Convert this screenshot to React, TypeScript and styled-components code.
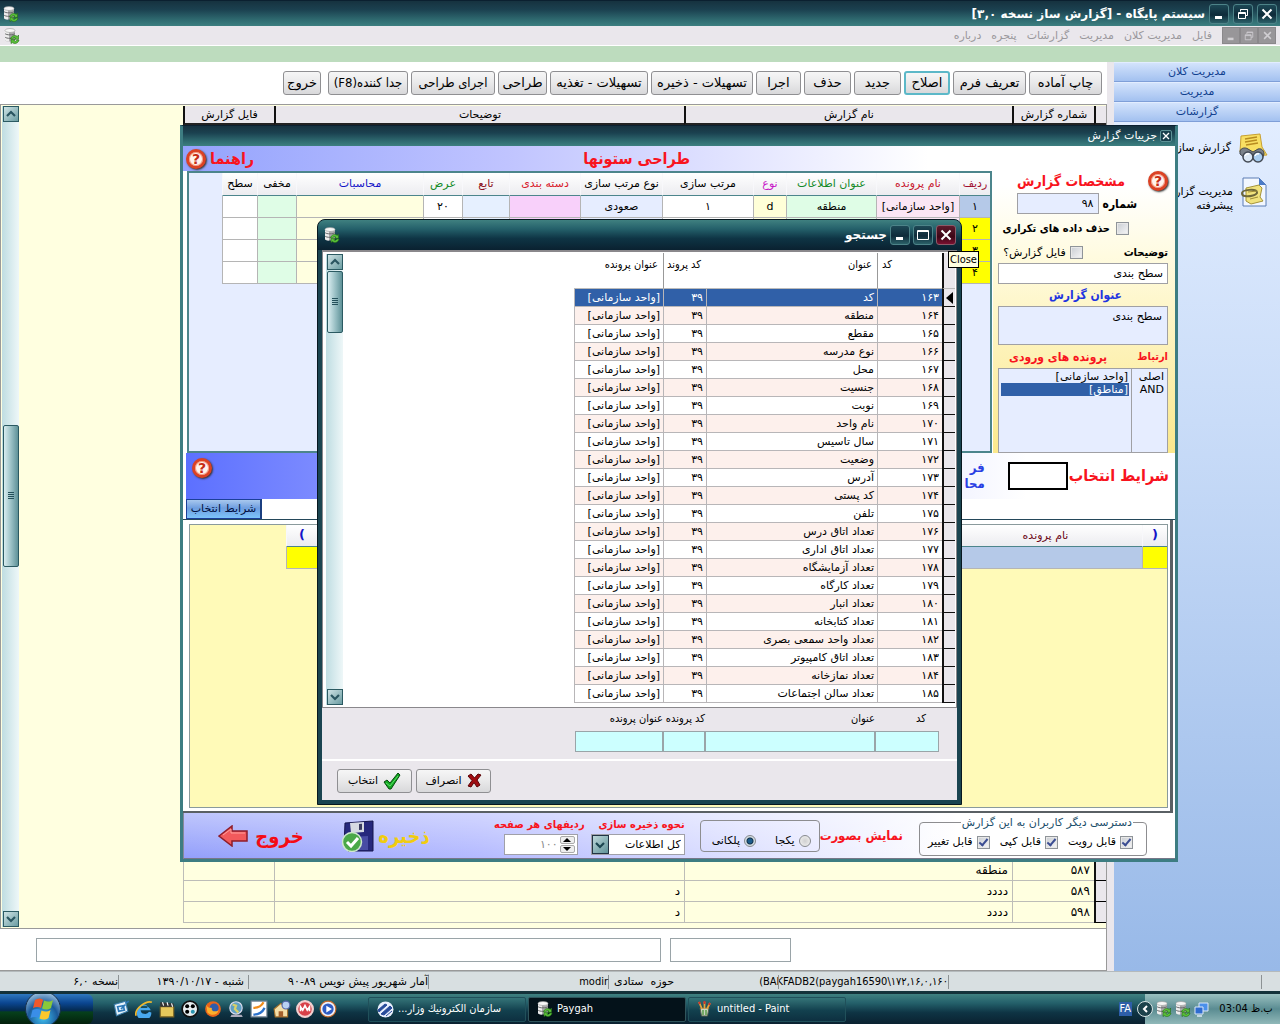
import React from "react";
import styled, { createGlobalStyle, css } from "styled-components";

const c = {
  teal: "#3c7f80",
  silver: "#eae7ec",
  cream: "#ffffe0",
  ink: "#000000",
  red: "#f8141e",
  blue: "#1f35e0",
  select: "#3060a8",
  ice: "#e6edff",
};

const wide = `"DejaVu Sans", Tahoma, sans-serif`;
const narrow = `"DejaVu Sans Condensed", "DejaVu Sans", Tahoma, sans-serif`;

const chrome = `linear-gradient(to bottom, #16323f 0%, #1b4150 35%, #2f6a70 75%, ${c.teal} 100%)`;
const chromeDown = "linear-gradient(to bottom, #3f8080 0%, #24606a 30%, #0e3444 62%, #0a2130 100%)";

const GlobalStyle = createGlobalStyle`
  *, *::before, *::after { box-sizing: border-box; }
  html, body, #root { height: 100%; }
  body {
    margin: 0;
    overflow: hidden;
    background: #fff;
    color: ${c.ink};
    font-family: ${wide};
    font-size: 11px;
    line-height: 14px;
  }
  button, input, select, textarea { font: inherit; color: inherit; margin: 0; border-radius: 0; }
  button { cursor: default; }
`;

const Desktop = styled.div`
  position: relative;
  display: flex;
  flex-direction: column;
  height: 100vh;
  overflow: hidden;
`;

const TitleBar = styled.header`
  display: flex;
  align-items: center;
  gap: 4px;
  height: 26px;
  flex: none;
  padding: 0 3px;
  border-top: 1px solid #0b2030;
  background: ${chrome};
  color: #fff;
`;

const TitleText = styled.h1`
  flex: 1;
  margin: 0;
  font-size: 12px;
  line-height: 18px;
  font-weight: bold;
`;

const WindowButton = styled.button<{ $danger?: boolean }>`
  display: flex;
  align-items: center;
  justify-content: center;
  width: 20px;
  height: 20px;
  padding: 0;
  border: 1px solid ${(p) => (p.$danger ? "#8d5a68" : "#4d8388")};
  border-radius: 3px;
  background: ${(p) =>
    p.$danger ? "linear-gradient(#5d1a2c, #3c0616 60%, #7a1030)" : "linear-gradient(#1d4855, #0e2b3a 55%, #2b6068)"};
  color: #fff;
`;

const MenuBar = styled.nav`
  display: flex;
  align-items: center;
  gap: 10px;
  height: 20px;
  flex: none;
  padding: 0 4px;
  border-bottom: 1px solid #fff;
  background: ${c.silver};
  color: #9a989c;
`;

const MdiButtons = styled.div`
  display: flex;
`;

const MdiButton = styled.button`
  display: flex;
  align-items: center;
  justify-content: center;
  width: 18px;
  height: 17px;
  padding: 0;
  border: 1px solid #8a888b;
  background: #989699;
  color: #d0ced2;
`;

const MenuLink = styled.a`
  color: inherit;
  text-decoration: none;
`;

const Push = styled.span`
  flex: 1;
`;

const GreenStrip = styled.div`
  height: 16px;
  flex: none;
  background: #bddcbe;
`;

const Main = styled.main`
  display: flex;
  flex: 1;
  min-height: 0;
`;

const SideBar = styled.aside`
  display: flex;
  flex-direction: column;
  width: 173px;
  border-left: 7px solid ${c.silver};
  background: linear-gradient(to bottom, #e2edff 60px, #c9dcf8 360px, #98b9e8);
`;

const SideGroup = styled.button`
  height: 19px;
  flex: none;
  margin-top: 1px;
  padding: 0;
  border: 0;
  border-bottom: 1px solid #7f9fd8;
  background: linear-gradient(#d3e3fc, #a3c1f0);
  color: #10408f;
`;

const SideItem = styled.a`
  display: flex;
  align-items: flex-start;
  gap: 7px;
  height: 44px;
  padding: 0 12px;
  color: #000;
  text-decoration: none;
  white-space: nowrap;
  line-height: 14px;

  svg { flex: none; }
  span { padding-top: 8px; }
`;

const SideList = styled.div`
  padding-top: 11px;
`;

const Content = styled.section`
  display: flex;
  flex-direction: column;
  flex: 1;
  min-width: 0;
  border-bottom: 1px solid #999;
`;

const Toolbar = styled.div`
  display: flex;
  align-items: center;
  gap: 3px;
  height: 42px;
  flex: none;
  padding: 0 5px;
`;

const face = css`
  border: 1px solid #8f8f92;
  border-radius: 3px;
  background: linear-gradient(#f6f6f6, #e9e9ea 50%, #d8d8da);
`;

const ToolButton = styled.button<{ $w: number; $active?: boolean; $apart?: boolean; $narrow?: boolean }>`
  ${face}
  width: ${(p) => p.$w}px;
  height: 24px;
  flex: none;
  padding: 0;
  font-family: ${(p) => (p.$narrow ? narrow : wide)};
  font-size: 13px;
  line-height: 20px;
  white-space: nowrap;
  ${(p) => p.$active && "border: 2px solid #5cb8c8;"}
  ${(p) => p.$apart && "margin-right: 4px;"}
`;

const GridArea = styled.div`
  display: flex;
  flex: 1;
  min-height: 0;
  overflow: hidden;
  border: 1px solid #9a9a9a;
  background: ${c.cream};
`;

const ReportTable = styled.table`
  width: 923px;
  table-layout: fixed;
  border-collapse: separate;
  border-spacing: 0;
  margin-top: 1px;
  align-self: flex-start;

  th {
    height: 19px;
    padding: 0;
    border-bottom: 2px solid #222;
    border-left: 2px solid #111;
    background: ${c.silver};
    font-weight: normal;
  }
  td {
    height: 21px;
    padding: 0 4px;
    border-bottom: 1px solid #bdbdb8;
    border-left: 1px solid #bdbdb8;
    font-size: 12px;
  }
  tbody th {
    height: 21px;
    border-bottom: 1px solid #000;
  }
`;

const Scroller = styled.div`
  display: flex;
  flex-direction: column;
  width: 17px;
  flex: none;
  margin: 1px;
  background: linear-gradient(to right, #bfdde2, #eef7f8);
`;

const ScrollButton = styled.button`
  display: flex;
  align-items: center;
  justify-content: center;
  width: 16px;
  height: 16px;
  flex: none;
  padding: 0;
  border: 1px solid #2b5a62;
  background: linear-gradient(135deg, #cfe3e5, #6b9da2);
  color: #2a5560;
`;

const ScrollTrack = styled.div<{ $before: number }>`
  flex: 1;
  padding-top: ${(p) => p.$before}px;
`;

const Thumb = styled.div<{ $h: number }>`
  display: flex;
  align-items: center;
  justify-content: center;
  width: 16px;
  height: ${(p) => p.$h}px;
  border: 1px solid #2b5a62;
  border-radius: 2px;
  background: linear-gradient(to right, #d9edf0, #8fb8bd 60%, #5f9298);
`;

const EntryStrip = styled.div`
  display: flex;
  justify-content: flex-end;
  gap: 9px;
  height: 41px;
  flex: none;
  padding: 9px 0 0 36px;
  border-right: 1px solid #999;
`;

const Entry = styled.input<{ $w: number }>`
  width: ${(p) => p.$w}px;
  height: 24px;
  border: 1px solid #9aa4a8;
  background: #fff;
`;

const StatusBar = styled.footer`
  display: flex;
  align-items: center;
  height: 20px;
  flex: none;
  padding-right: 18px;
  background: #d8dfe1;
  border-top: 1px solid #b4babc;
`;

const StatusCell = styled.span<{ $w: number; $inset?: number }>`
  width: ${(p) => p.$w}px;
  height: 14px;
  padding-right: ${(p) => p.$inset ?? 0}px;
  border-right: 1px solid #8c9294;
  white-space: nowrap;

  bdi { font-family: ${narrow}; }
`;

const TaskBar = styled.div`
  display: flex;
  align-items: stretch;
  height: 33px;
  flex: none;
  border-top: 3px solid #14323a;
  background: ${chromeDown};
  color: #fff;
  font-family: ${narrow};
`;

const StartButton = styled.button`
  display: flex;
  align-items: center;
  width: 93px;
  padding: 0 0 0 25px;
  border: 0;
  border-radius: 0 6px 6px 0;
  background: linear-gradient(#2f78c0 0%, #0b4690 30%, #042a50 55%, #06401c 60%, #03200c 100%);
`;

const QuickLaunch = styled.div`
  display: flex;
  align-items: center;
  gap: 5px;
  width: 275px;
  padding-left: 19px;
`;

const Tasks = styled.div`
  display: flex;
  align-items: center;
  gap: 2px;
  flex: 1;
`;

const Task = styled.button<{ $active?: boolean }>`
  display: flex;
  align-items: center;
  gap: 4px;
  width: 158px;
  height: 25px;
  padding: 0 8px;
  border: 1px solid ${(p) => (p.$active ? "#30555c" : "#20505a")};
  border-radius: 2px;
  background: ${(p) => (p.$active ? "#04121a" : "linear-gradient(#357478, #12404e 55%, #0d3040)")};
  color: #fff;
  white-space: nowrap;
`;

const Tray = styled.div`
  display: flex;
  align-items: center;
  gap: 3px;
  width: 135px;
  background: linear-gradient(#9ac0c0, #5a8c92 50%, #90b8b8);
  color: #000;
`;

const Language = styled.span`
  align-self: center;
  margin: 0 13px;
  padding: 0 1px;
  background: #2d5ea8;
`;

const Clock = styled.time`
  flex: 1;
  text-align: center;
`;

const TrayToggle = styled.button`
  width: 16px;
  height: 16px;
  display: flex;
  align-items: center;
  justify-content: center;
  margin-left: -8px;
  padding: 0;
  border: 1px solid #d8e4e4;
  border-radius: 50%;
  background: #1c424c;
  color: #fff;
`;

/* report details window */

const ReportWindow = styled.section`
  position: absolute;
  top: 125px;
  left: 180px;
  display: flex;
  flex-direction: column;
  width: 998px;
  height: 737px;
  border: 3px solid #3d7d82;
  border-top: 1px solid #0b2030;
  background: #fff;
`;

const ReportTitle = styled.header`
  display: flex;
  align-items: center;
  gap: 3px;
  height: 20px;
  flex: none;
  padding: 0 3px;
  background: ${chrome};
  color: #fff;
`;

const SmallClose = styled.button`
  display: flex;
  align-items: center;
  justify-content: center;
  width: 12px;
  height: 12px;
  padding: 0;
  border: 1px solid #5d9296;
  border-radius: 2px;
  background: #173f4c;
  color: #fff;
`;

const Upper = styled.div`
  display: flex;
  height: 307px;
  flex: none;
`;

const InfoPanel = styled.div`
  display: flex;
  flex-direction: column;
  width: 182px;
  flex: none;
  padding: 24px 7px 0 5px;
  background: linear-gradient(to bottom, #fff 40px, #fffbe0 110px, #fbe88c);
`;

const InfoHead = styled.div`
  display: flex;
  align-items: center;
  gap: 23px;
  height: 22px;
`;

const captionFace = css<{ $color?: string; $size?: number }>`
  color: ${(p) => p.$color ?? "#000"};
  font-family: ${narrow};
  font-size: ${(p) => p.$size ?? 11}px;
  line-height: 18px;
  font-weight: bold;
  white-space: nowrap;
`;

const Caption = styled.span<{ $color?: string; $size?: number }>`
  ${captionFace}
`;

const CaptionLabel = styled.label<{ $color?: string; $size?: number }>`
  ${captionFace}
`;

const Help = styled.button`
  display: flex;
  align-items: center;
  justify-content: center;
  width: 20px;
  height: 20px;
  flex: none;
  padding: 0;
  border: 3px solid #dc4224;
  border-radius: 50%;
  background: #fff4ee;
  box-shadow: inset 0 0 0 1px #f6a48c, 1px 1px 2px #333;
  color: #c62b12;
  font-size: 14px;
  line-height: 14px;
  font-weight: bold;
`;

const NumberRow = styled.div`
  display: flex;
  align-items: center;
  gap: 4px;
  height: 23px;
  padding-right: 31px;
`;

const TickRow = styled.div`
  display: flex;
  align-items: center;
  gap: 6px;
  height: 27px;
  padding-right: 39px;
  white-space: nowrap;
`;

const NoteRow = styled.div`
  display: flex;
  align-items: center;
  gap: 41px;
  height: 21px;
`;

const Choice = styled.label`
  display: flex;
  align-items: center;
  gap: 4px;
  white-space: nowrap;
`;

const Tick = styled.input.attrs({ type: "checkbox" })`
  appearance: none;
  position: relative;
  width: 13px;
  height: 13px;
  flex: none;
  border: 1px solid #8f9499;
  outline: 1px solid #e8e8e8;
  outline-offset: -2px;
  background: linear-gradient(135deg, #c9cdd2, #f6f6f7);

  &:checked::after {
    content: "";
    position: absolute;
    left: 3px;
    top: 0;
    width: 5px;
    height: 9px;
    border: solid #3b4d92;
    border-width: 0 2px 2px 0;
    transform: rotate(40deg);
  }
`;

const Radio = styled.input.attrs({ type: "radio" })`
  appearance: none;
  width: 12px;
  height: 12px;
  flex: none;
  border: 1px solid #86898d;
  border-radius: 50%;
  background: radial-gradient(#d0d0d0, #f4f4f4);

  &:checked {
    background: radial-gradient(#1c5c8c 0 2px, #12304a 3px, #d4dde2 4px);
  }
`;

const Field = styled.input<{ $w?: number; $bg?: string }>`
  width: ${(p) => (p.$w ? `${p.$w}px` : "100%")};
  height: 21px;
  flex: none;
  padding: 0 4px;
  border: 1px solid #a0a0a4;
  background: ${(p) => p.$bg ?? "#fff"};
`;

const TitleLabel = styled(CaptionLabel)`
  height: 22px;
  padding-right: 46px;
  line-height: 22px;
`;

const TitleArea = styled.textarea`
  display: block;
  width: 100%;
  height: 39px;
  padding: 3px 5px;
  border: 1px solid #a0a0a4;
  background: ${c.ice};
  resize: none;
`;

const ListHeads = styled.div`
  display: flex;
  align-items: center;
  gap: 30px;
  height: 23px;
`;

const Lists = styled.div`
  display: flex;
  flex: 1;
  border: 1px solid #a0a0a4;
  background: ${c.ice};
`;

const List = styled.ul<{ $w?: number }>`
  width: ${(p) => (p.$w ? `${p.$w}px` : "auto")};
  flex: ${(p) => (p.$w ? "none" : "1")};
  margin: 0;
  padding: 1px 2px;
  list-style: none;
  line-height: 13px;

  & + & { border-right: 1px solid #a0a0a4; }
`;

const ListItem = styled.li<{ $on?: boolean }>`
  padding-right: 1px;
  ${(p) => p.$on && `background: ${c.select}; color: #fff;`}
`;

const Design = styled.div`
  display: flex;
  flex-direction: column;
  flex: 1;
`;

const DesignHead = styled.div`
  display: flex;
  align-items: center;
  gap: 4px;
  height: 25px;
  flex: none;
  padding: 0 3px;
  background: linear-gradient(to right, #94a3fd, #c0c4ff 40%, #fff 92%);
`;

const HeadIndent = styled.span`
  width: 296px;
`;

const DesignGrid = styled.div`
  flex: 1;
  margin: 0 1px 0 4px;
  border: 2px solid #4c858c;
  background: ${c.ice};
`;

const ColumnsTable = styled.table`
  width: 768px;
  table-layout: fixed;
  border-collapse: separate;
  border-spacing: 0;
  text-align: center;

  th {
    height: 23px;
    padding: 0;
    border-bottom: 1px solid #4c858c;
    border-left: 1px solid #f8f8fb;
    background: linear-gradient(#fff, #ececf0);
    font-weight: normal;
    white-space: nowrap;
  }
  td {
    height: 22px;
    padding: 0;
    border-bottom: 1px solid #b5b5b5;
    border-left: 1px solid #b5b5b5;
    white-space: nowrap;
  }
`;

const Cell = styled.td<{ $bg: string }>`
  background: ${(p) => p.$bg};
`;

const HeadCell = styled.th<{ $color: string }>`
  color: ${(p) => p.$color};

  b { font-size: 13px; }
`;

const Conditions = styled.div`
  display: flex;
  align-items: center;
  height: 46px;
  flex: none;
  margin-left: 3px;
  padding: 0 6px;
  background: linear-gradient(to right, #5c70ff, #8c98ff 20%, #fff 85%);

  ${Help} {
    align-self: flex-start;
    margin-top: 5px;
  }
`;

const BlackBox = styled.input`
  width: 60px;
  height: 28px;
  margin: 0 1px 0 23px;
  border: 2px solid #000;
  background: #fff;
`;

const Formula = styled.div`
  flex: 1;
  color: #2a3fe4;
  font-family: ${narrow};
  font-size: 13px;
  line-height: 16px;
  font-weight: bold;
`;

const TabRow = styled.div`
  display: flex;
  justify-content: flex-end;
  height: 21px;
  flex: none;
  padding-left: 3px;
  border-bottom: 1px solid #24485a;
`;

const Tab = styled.button`
  width: 76px;
  padding: 0;
  border: 1px solid #1b3f9a;
  border-right: 2px solid #1b3f80;
  background: linear-gradient(#a8c8ee, #6f9ee0 45%, #7cc4fa);
  color: #001040;
  white-space: nowrap;
`;

const Filter = styled.div`
  flex: 1;
  padding: 4px 2px 3px 6px;
  margin-right: 2px;
  border-right: 3px solid #5a6064;
  border-bottom: 2px solid #5a6064;
`;

const FilterBody = styled.div`
  height: 100%;
  border: 1px solid #8a9a9c;
  background: #fffab8;
`;

const FilterTable = styled(ColumnsTable)`
  width: 881px;

  th { height: 22px; }
`;

const Footer = styled.div`
  display: flex;
  align-items: center;
  height: 46px;
  flex: none;
  padding-right: 28px;
  border-left: 1px solid #889;
  border-bottom: 1px solid #778;
  background: linear-gradient(to bottom, rgba(255, 255, 255, 0.4), rgba(255, 255, 255, 0)),
    linear-gradient(to right, #939ffb, #b4baff 30%, #fff 78%);
`;

const Access = styled.fieldset`
  display: flex;
  justify-content: space-between;
  width: 228px;
  height: 40px;
  margin: 0 0 0 16px;
  padding: 0 13px 0 8px;
  border: 1px solid #8d8d90;
  border-radius: 4px;

  legend {
    padding: 0 1px;
    color: #1b4e6a;
  }
`;

const Display = styled.div`
  display: flex;
  align-items: flex-end;
  justify-content: space-between;
  width: 120px;
  height: 32px;
  margin-left: 15px;
  padding: 0 8px 3px 11px;
  border: 1px solid #8d8d90;
  border-radius: 4px;
`;

const FootColumn = styled.div<{ $w: number }>`
  display: flex;
  flex-direction: column;
  width: ${(p) => p.$w}px;
`;

const Combo = styled.div`
  position: relative;
  width: 94px;
`;

const ComboSelect = styled.select`
  appearance: none;
  width: 100%;
  height: 21px;
  padding: 0 3px;
  border: 1px solid #a0a0a8;
  background: #fff;
`;

const ComboArrow = styled.span`
  position: absolute;
  top: 1px;
  left: 1px;
  display: flex;
  align-items: center;
  justify-content: center;
  width: 17px;
  height: 19px;
  border: 1px solid #234;
  background: linear-gradient(135deg, #bfd8da, #5f9298);
  color: #1b4550;
  pointer-events: none;
`;

const Spinner = styled.div`
  display: flex;
  align-items: center;
  width: 74px;
  height: 21px;
  margin-right: 7px;
  padding: 0 2px;
  border: 1px solid #a0a0a8;
  background: #fff;
`;

const SpinButtons = styled.span`
  display: flex;
  flex-direction: column;
  gap: 1px;
`;

const SpinButton = styled.button`
  display: flex;
  align-items: center;
  justify-content: center;
  width: 15px;
  height: 8px;
  padding: 0;
  border: 1px solid #aaa;
  border-radius: 2px;
  background: #eee;
`;

const SpinInput = styled.input`
  width: 50px;
  padding: 0 2px;
  border: 0;
  background: transparent;
  color: #888;
`;

const BigButton = styled.button<{ $color: string; $w: number; $gap: number }>`
  display: flex;
  align-items: center;
  justify-content: space-between;
  width: ${(p) => p.$w}px;
  margin-right: ${(p) => p.$gap}px;
  padding: 0;
  border: 0;
  background: transparent;
  color: ${(p) => p.$color};
  font-family: ${narrow};
  font-size: 20px;
  line-height: 30px;
  font-weight: bold;
  white-space: nowrap;
`;

/* search window */

const SearchWindow = styled.section`
  position: absolute;
  top: 219px;
  left: 317px;
  display: flex;
  flex-direction: column;
  width: 645px;
  height: 586px;
  padding: 0 4px 4px;
  border: 1px solid #081820;
  border-radius: 8px 8px 0 0;
  background: #1a4450;
  overflow: hidden;
`;

const SearchTitle = styled.header`
  display: flex;
  align-items: center;
  gap: 3px;
  height: 30px;
  flex: none;
  margin: 0 -4px;
  padding: 0 5px 0 6px;
  background: ${chromeDown};
  color: #fff;
`;

const SearchGrid = styled.div`
  display: flex;
  height: 458px;
  flex: none;
  padding: 1px 1px 1px 2px;
  border: 1px solid #8a888c;
  border-top-width: 2px;
  background: #fff;
`;

const SearchTable = styled.table`
  width: 381px;
  table-layout: fixed;
  border-collapse: separate;
  border-spacing: 0;
  align-self: flex-start;

  thead th {
    height: 36px;
    padding: 5px 5px 0 0;
    vertical-align: top;
    font-family: ${narrow};
    font-weight: normal;
    text-align: right;
    white-space: nowrap;
    border-bottom: 1px solid #bbb;
  }
  tbody th {
    padding: 0;
    border-left: 2px solid #111;
    border-bottom: 1px solid #111;
    background: ${c.silver};
    line-height: 10px;
  }
  td {
    height: 18px;
    padding: 1px 3px 0;
    border-left: 1px solid #b8b6b8;
    border-bottom: 1px solid #b8b6b8;
    line-height: 16px;
    white-space: nowrap;
  }
`;

const SearchHead = styled.th<{ $mark?: "black" | "gray"; $end?: boolean }>`
  ${(p) => p.$mark === "black" && `border-left: 2px solid #111; background: ${c.silver};`}
  ${(p) => p.$mark === "gray" && "border-left: 1px solid #999;"}
  ${(p) => p.$end && "&&& { text-align: left; padding-left: 4px; }"}
`;

const SearchRow = styled.tr<{ $on?: boolean; $odd?: boolean }>`
  td {
    ${(p) => p.$odd && "background: #fdf0ec;"}
    ${(p) => p.$on && `background: ${c.select}; color: #fff;`}
  }
`;

const Pointer = styled.span`
  display: block;
  width: 0;
  height: 0;
  margin: 0 2px;
  border: solid transparent;
  border-width: 6px 7px 6px 0;
  border-right-color: #000;
`;

const Criteria = styled.div`
  display: flex;
  height: 53px;
  flex: none;
  padding: 4px 18px 0;
  border-bottom: 2px solid #fff;
  background: ${c.silver};
`;

const Criterion = styled.label<{ $w: number; $inset?: number }>`
  display: flex;
  flex-direction: column;
  gap: 5px;
  width: ${(p) => p.$w}px;
  white-space: nowrap;
  font-family: ${narrow};

  span { padding-right: ${(p) => p.$inset ?? 0}px; }
`;

const CriterionInput = styled.input`
  width: 100%;
  height: 21px;
  border: 1px solid #9aa4a8;
  background: #ccffff;
`;

const SearchActions = styled.div`
  display: flex;
  align-items: center;
  justify-content: flex-end;
  gap: 4px;
  flex: 1;
  padding-left: 15px;
  background: ${c.silver};
`;

const ActionButton = styled.button`
  ${face}
  display: flex;
  align-items: center;
  justify-content: center;
  gap: 5px;
  width: 75px;
  height: 24px;
  padding: 0;
`;

const Tooltip = styled.div`
  position: absolute;
  top: 251px;
  left: 948px;
  padding: 0 1px;
  border: 1px solid #000;
  background: #ffffe1;
  font-family: ${narrow};
  line-height: 15px;
`;

/* drawings */

const CloseGlyph = ({ size = 12 }: { size?: number }) => (
  <svg width={size} height={size} viewBox="0 0 12 12" fill="none" stroke="currentColor" strokeWidth="2">
    <path d="M1.5 1.5l9 9M10.5 1.5l-9 9" />
  </svg>
);
const MinGlyph = ({ size = 12 }: { size?: number }) => (
  <svg width={size} height={size} viewBox="0 0 12 12" fill="currentColor">
    <path d="M2 8h7v3H2z" />
  </svg>
);
const MaxGlyph = () => (
  <svg width="12" height="12" viewBox="0 0 12 12" fill="none" stroke="currentColor">
    <path d="M.5 1.5h11v9H.5zM.5 2.5h11" />
  </svg>
);
const RestoreGlyph = ({ size = 12 }: { size?: number }) => (
  <svg width={size} height={size} viewBox="0 0 12 12" fill="none" stroke="currentColor">
    <path d="M3.5 3.5v-2h7v6h-2M1.5 4.5h7v6h-7zM1.5 5.5h7M3.5 1.5h7" />
  </svg>
);
const Chevron = ({ up }: { up?: boolean }) => (
  <svg width="10" height="8" viewBox="0 0 10 8" fill="none" stroke="currentColor" strokeWidth="2.2">
    <path d={up ? "M1 6l4-4 4 4" : "M1 2l4 4 4-4"} />
  </svg>
);
const Grip = () => (
  <svg width="8" height="8" viewBox="0 0 8 8" stroke="#24505a">
    <path d="M1 .5h6M1 2.5h6M1 4.5h6M1 6.5h6" />
  </svg>
);
const Triangle = ({ up }: { up?: boolean }) => (
  <svg width="8" height="4" viewBox="0 0 8 4">
    <path d={up ? "M0 4l4-4 4 4z" : "M0 0l4 4 4-4z"} />
  </svg>
);
const DatabaseIcon = () => (
  <svg width="16" height="16" viewBox="0 0 16 16">
    <path d="M1 2v10c0 2 10 2 10 0V2z" fill="#a9a9ab" />
    <path d="M1 2v10c0 1 3 1.500 4 1.500V3z" fill="#ededed" />
    <ellipse cx="6" cy="2.500" rx="5" ry="2" fill="#f6f6f6" stroke="#999" strokeWidth=".6" />
    <path d="M1 5.500c1 1.800 9 1.800 10 0M1 9c1 1.800 9 1.800 10 0" fill="none" stroke="#6a6a6c" />
    <path d="M6.500 11a4.200 4.200 0 0 1 6.800-2.500L14.500 7v4.300h-4l1.300-1.300a2.400 2.400 0 0 0-3.300 1z" fill="#5bc23a" stroke="#216b16" strokeWidth=".6" />
    <path d="M15 12a4.200 4.200 0 0 1-6.800 2.500L7 15.600v-4h4l-1.200 1.300a2.400 2.400 0 0 0 3.200-.9z" fill="#5bc23a" stroke="#216b16" strokeWidth=".6" />
  </svg>
);
const BinocularsIcon = () => (
  <svg width="30" height="30" viewBox="0 0 30 30">
    <path d="M3 3l19-2 2 13 5 8-12 1-15-4z" fill="#f8df62" stroke="#c8a032" />
    <path d="M7 6l12-2M7 9l12-2M8 12l12-2" stroke="#b88c20" strokeWidth="1.500" />
    <path d="M2 18c1-3 5-4 8-2l5 3 5-3c4-1 6 2 6 5l-2 5H8l-6-5z" fill="#7b828a" stroke="#3f444c" />
    <circle cx="10" cy="24" r="5" fill="#dbe8f6" stroke="#444a54" strokeWidth="1.500" />
    <circle cx="20" cy="24" r="5" fill="#a8cdf0" stroke="#444a54" strokeWidth="1.500" />
    <path d="M7 23a3 3 0 0 1 4-2M17 23a3 3 0 0 1 4-2" stroke="#fff" fill="none" strokeWidth="1.500" />
  </svg>
);
const ScrollIcon = () => (
  <svg width="28" height="30" viewBox="0 0 28 30">
    <path d="M3 1h16l7 7v21H3z" fill="#f2f7ff" stroke="#5a7cb4" />
    <path d="M19 1v7h7z" fill="#4b7cc8" />
    <path d="M6 11l13-3 3 3-2 9 3 4-12 3-5-3z" fill="#f0e27c" stroke="#a5943a" />
    <path d="M2 16c0-3 14-5 15-1 1 3-8 5-12 4-2 0-3-1-3-3z" fill="none" stroke="#6d673a" strokeWidth="2" />
    <path d="M8 15l9-1M10 22l8-2" stroke="#a08d38" />
  </svg>
);
const CheckIcon = () => (
  <svg width="18" height="18" viewBox="0 0 18 18">
    <path d="M1 10l3-2 3 3 8-10 2 2L8 17H6z" fill="#12a822" stroke="#06480c" />
    <path d="M3 11l4 3 8-10" fill="none" stroke="#5fe06a" />
  </svg>
);
const CrossIcon = () => (
  <svg width="15" height="15" viewBox="0 0 15 15">
    <path d="M1 3l3-2 3.500 4L11 1l3 1-4 5 3 5-3 2-3-4.500L4 14l-3-1 4-5.500z" fill="#a00c10" stroke="#5a0406" />
  </svg>
);
const FloppyIcon = () => (
  <svg width="32" height="32" viewBox="0 0 32 32">
    <path d="M3 3l28-2v30H6l-4-4z" fill="#26287c" stroke="#14154c" />
    <path d="M8 3l14-1v10l-13 1z" fill="#d6dae2" />
    <path d="M17 4l3-.2v6l-3 .2z" fill="#3a3c60" />
    <path d="M8 17l18-1v14H8z" fill="#484ca4" />
    <circle cx="10" cy="22" r="9.500" fill="#4aa848" stroke="#cfe8cc" strokeWidth="1.500" />
    <path d="M5 22l4 4 7-8" fill="none" stroke="#fff" strokeWidth="3" />
  </svg>
);
const ArrowIcon = () => (
  <svg width="30" height="22" viewBox="0 0 30 22">
    <path d="M1 11L14 1v5h15v10H14v5z" fill="#f25a5c" stroke="#8e1d2a" strokeWidth="1.500" />
    <path d="M5 10l8-6v4h14" fill="none" stroke="#ffa09c" />
  </svg>
);
const StartOrb = () => (
  <svg width="36" height="30" viewBox="0 0 36 30">
    <defs>
      <radialGradient id="orb" cx="50%" cy="75%" r="70%">
        <stop offset="0" stopColor="#3fc0f0" />
        <stop offset=".6" stopColor="#1b5a9a" />
        <stop offset="1" stopColor="#8fb6d8" />
      </radialGradient>
    </defs>
    <circle cx="18" cy="15" r="17.500" fill="url(#orb)" stroke="#16304c" />
    <path d="M10 6c3-2 6-2 8 0l-2 8c-2-1.500-5-1.500-8 0z" fill="#f0582a" />
    <path d="M19 6.500c3 1.500 6 1.500 9-.5l-2 8c-3 2-6 2-9 .5z" fill="#8ac83a" />
    <path d="M7.500 16c3-1.500 6-1.500 8 0l-2 8c-2-1.500-5-1.500-8 0z" fill="#3a8ee8" />
    <path d="M16.500 16.500c3 1.500 6 1.500 9-.5l-2 8c-3 2-6 2-9 .5z" fill="#fbc82c" />
  </svg>
);
const PaintIcon = () => (
  <svg width="16" height="16" viewBox="0 0 16 16">
    <path d="M3 7h9l-1.500 8h-6z" fill="#c8d4c0" stroke="#55604e" />
    <path d="M5 8L2 1M7.500 8V1M10 8l3-6" stroke="#e8a23c" strokeWidth="1.800" />
    <path d="M2 1l1 2M7.500 0v3M13 2l-1 2" stroke="#d0342c" strokeWidth="2" />
    <path d="M6 9v5M9 9v5" stroke="#5a9a4a" strokeWidth="1.500" />
  </svg>
);
const ShellIcon = () => (
  <svg width="17" height="17" viewBox="0 0 17 17">
    <circle cx="8.500" cy="8.500" r="8" fill="#e8eefc" />
    <path d="M1 9l7-6 2 1-8 7zM4 13l9-8 2 2-8 7zM9 15l6-5" fill="#274a9a" stroke="#274a9a" />
  </svg>
);
const MonitorsIcon = () => (
  <svg width="15" height="15" viewBox="0 0 15 15">
    <path d="M5 1h9v8H5z" fill="#4a90ea" stroke="#dce8f8" />
    <path d="M1 5h8v7H1z" fill="#2f6cd0" stroke="#dce8f8" />
    <path d="M3 14h5" stroke="#dce8f8" strokeWidth="1.500" />
  </svg>
);

const quickIcons: { name: string; art: React.ReactNode }[] = [
  { name: "desktop", art: <><path d="M2 4l10-3 2 9-10 4z" fill="#e4f2fb" stroke="#3a7ca8" /><path d="M5 6l5-1 1 4-5 1zM12 3l3-2M8 8l4-4" fill="none" stroke="#2b78b8" strokeWidth="1.500" /></> },
  { name: "explorer", art: <><path d="M14 9H5a4 3.500 0 0 0 7.500 1.500l2 .5A6.500 6.500 0 1 1 14 9zM5 7h6a3 3 0 0 0-6 0z" fill="#48a8ee" /><path d="M1 14C-1 8 10 0 15 2" fill="none" stroke="#f0b82c" strokeWidth="1.500" /></> },
  { name: "movie", art: <><path d="M2 6h12v9H2z" fill="#e6c85c" stroke="#7b6222" /><path d="M2 2l12 1v3H2z" fill="#333" /><path d="M4 2l1 3M8 2l1 3M12 3l1 3" stroke="#fff" /></> },
  { name: "reel", art: <><circle cx="8" cy="8" r="7" fill="#e8eef0" stroke="#111" strokeWidth="1.500" /><circle cx="5.500" cy="5.500" r="1.800" /><circle cx="10.500" cy="5.500" r="1.800" /><circle cx="5.500" cy="10.500" r="1.800" /><circle cx="10.500" cy="10.500" r="1.800" fill="#2a94b0" /></> },
  { name: "fox", art: <><circle cx="8" cy="8" r="7" fill="#e8641a" /><circle cx="9" cy="7" r="4" fill="#2f5cab" /><path d="M2 4c1 3 3 3 5 3-1 3 3 4 6 2-1 4-6 6-10 2z" fill="#fbb02c" /></> },
  { name: "globe", art: <><path d="M4 13h9l1 2H3z" fill="#aab" /><circle cx="8" cy="7" r="5.500" fill="#5fa0c4" stroke="#dde" /><path d="M5 4l3 1-1 3 3 3" stroke="#d8d068" strokeWidth="2" fill="none" /></> },
  { name: "sheet", art: <><path d="M1 1h14v14H1z" fill="#fff" stroke="#789" /><path d="M3 7c4 0 7-1 9-5" stroke="#f08c1c" strokeWidth="2" fill="none" /><path d="M3 13c5 0 8-2 10-6" stroke="#2b72cc" strokeWidth="2" fill="none" /></> },
  { name: "home", art: <><path d="M1 8l6-5 6 5v7H2z" fill="#f4dfa8" stroke="#a4722c" /><path d="M5 10h4v5H5z" fill="#a4602c" /><circle cx="11.500" cy="4.500" r="3.500" fill="#b8d0f4" stroke="#56a" /></> },
  { name: "red", art: <><circle cx="8" cy="8" r="7" fill="#d84048" stroke="#f4d0d0" strokeWidth="2" /><path d="M4 10V6l2 3 2-4 2 4 2-3v4" stroke="#fff" fill="none" strokeWidth="1.500" /></> },
  { name: "player", art: <><circle cx="8" cy="8" r="7" fill="#f0f2fa" stroke="#c46a2c" /><circle cx="8" cy="8" r="5" fill="#2f5cc4" /><path d="M6.500 5l5 3-5 3z" fill="#fff" /></> },
];

/* data */

const tools: { text: string; w: number; active?: boolean; apart?: boolean; narrow?: boolean }[] = [
  { text: "چاپ آماده", w: 73 },
  { text: "تعریف فرم", w: 73 },
  { text: "اصلاح", w: 46, active: true },
  { text: "جدید", w: 47 },
  { text: "حذف", w: 47 },
  { text: "اجرا", w: 45 },
  { text: "تسهیلات - ذخیره", w: 102 },
  { text: "تسهیلات - تغذیه", w: 98 },
  { text: "طراحی", w: 49 },
  { text: "اجرای طراحی", w: 84, narrow: true },
  { text: "جدا کننده(F8)", w: 80, narrow: true },
  { text: "خروج", w: 38, apart: true },
];

const menus = ["فایل", "مدیریت کلان", "مدیریت", "گزارشات", "پنجره", "درباره"];

const reports = [
  ["۵۸۷", "منطقه", ""],
  ["۵۸۹", "دددد", "د"],
  ["۵۹۸", "دددد", "د"],
];

const columns: { head: string; w: number; color: string; bg: string; first: string }[] = [
  { head: "ردیف", w: 31, color: "#a01030", bg: "#ffff00", first: "۱" },
  { head: "نام پرونده", w: 83, color: "#c81830", bg: "#fbe6f4", first: "[واحد سازمانی]" },
  { head: "عنوان اطلاعات", w: 90, color: "#138a28", bg: "#dffde6", first: "منطقه" },
  { head: "نوع", w: 33, color: "#c818c8", bg: "#ffffd8", first: "d" },
  { head: "مرتب سازی", w: 91, color: "#000", bg: "#fff", first: "۱" },
  { head: "نوع مرتب سازی", w: 82, color: "#000", bg: "#e6edff", first: "صعودی" },
  { head: "دسته بندی", w: 71, color: "#d8202c", bg: "#f8d0fa", first: "" },
  { head: "تابع", w: 47, color: "#8c1020", bg: "#e6f0ff", first: "" },
  { head: "عرض", w: 39, color: "#138a28", bg: "#fff", first: "۲۰" },
  { head: "محاسبات", w: 127, color: "#1414c8", bg: "#ffffe0", first: "" },
  { head: "مخفی", w: 39, color: "#000", bg: "#dffde6", first: "" },
  { head: "سطح", w: 35, color: "#000", bg: "#fff", first: "" },
];

const found = [
  ["۱۶۳", "کد"], ["۱۶۴", "منطقه"], ["۱۶۵", "مقطع"], ["۱۶۶", "نوع مدرسه"], ["۱۶۷", "محل"],
  ["۱۶۸", "جنسیت"], ["۱۶۹", "نوبت"], ["۱۷۰", "نام واحد"], ["۱۷۱", "سال تاسیس"], ["۱۷۲", "وضعیت"],
  ["۱۷۳", "آدرس"], ["۱۷۴", "کد پستی"], ["۱۷۵", "تلفن"], ["۱۷۶", "تعداد اتاق درس"],
  ["۱۷۷", "تعداد اتاق اداری"], ["۱۷۸", "تعداد آزمایشگاه"], ["۱۷۹", "تعداد کارگاه"],
  ["۱۸۰", "تعداد انبار"], ["۱۸۱", "تعداد کتابخانه"], ["۱۸۲", "تعداد واحد سمعی بصری"],
  ["۱۸۳", "تعداد اتاق کامپیوتر"], ["۱۸۴", "تعداد نمازخانه"], ["۱۸۵", "تعداد سالن اجتماعات"],
];

const ScrollBar = ({ before, thumb }: { before: number; thumb: number }) => (
  <Scroller>
    <ScrollButton><Chevron up /></ScrollButton>
    <ScrollTrack $before={before}>
      <Thumb $h={thumb}><Grip /></Thumb>
    </ScrollTrack>
    <ScrollButton><Chevron /></ScrollButton>
  </Scroller>
);

const ReportDetails = () => (
  <ReportWindow>
    <ReportTitle>
      <SmallClose><CloseGlyph size={8} /></SmallClose>
      <span>جزییات گزارش</span>
    </ReportTitle>
    <Upper>
      <InfoPanel>
        <InfoHead>
          <Help>?</Help>
          <Caption $color={c.red} $size={14}>مشخصات گزارش</Caption>
        </InfoHead>
        <NumberRow>
          <CaptionLabel htmlFor="number" $size={12}>شماره</CaptionLabel>
          <Field id="number" $w={82} $bg={c.ice} defaultValue="۹۸" />
        </NumberRow>
        <TickRow>
          <Tick id="distinct" />
          <CaptionLabel htmlFor="distinct">حذف داده های تکراری</CaptionLabel>
        </TickRow>
        <NoteRow>
          <CaptionLabel htmlFor="note">توضیحات</CaptionLabel>
          <Choice><Tick />فایل گزارش؟</Choice>
        </NoteRow>
        <Field id="note" defaultValue="سطح بندی" />
        <TitleLabel htmlFor="title" $color={c.blue} $size={12}>عنوان گزارش</TitleLabel>
        <TitleArea id="title" defaultValue="سطح بندی" />
        <ListHeads>
          <Caption $color={c.red}>ارتباط</Caption>
          <Caption $color={c.red} $size={12}>پرونده های ورودی</Caption>
        </ListHeads>
        <Lists>
          <List $w={35}>
            <ListItem>اصلی</ListItem>
            <ListItem>AND</ListItem>
          </List>
          <List>
            <ListItem>[واحد سازمانی]</ListItem>
            <ListItem $on>[مناطق]</ListItem>
          </List>
        </Lists>
      </InfoPanel>
      <Design>
        <DesignHead>
          <HeadIndent />
          <Caption $color={c.red} $size={16}>طراحی ستونها</Caption>
          <Push />
          <Caption $color={c.red} $size={16}>راهنما</Caption>
          <Help>?</Help>
        </DesignHead>
        <DesignGrid>
          <ColumnsTable>
            <colgroup>{columns.map((col) => <col key={col.head} width={col.w} />)}</colgroup>
            <thead>
              <tr>{columns.map((col) => <HeadCell key={col.head} $color={col.color}>{col.head}</HeadCell>)}</tr>
            </thead>
            <tbody>
              <tr>
                {columns.map((col, i) => <Cell key={col.head} $bg={i ? col.bg : "#b5c9e8"}>{col.first}</Cell>)}
              </tr>
              {["۲", "۳", "۴"].map((n) => (
                <tr key={n}>
                  {columns.map((col, i) => <Cell key={col.head} $bg={col.bg}>{i ? "" : n}</Cell>)}
                </tr>
              ))}
            </tbody>
          </ColumnsTable>
        </DesignGrid>
      </Design>
    </Upper>
    <Conditions>
      <CaptionLabel htmlFor="condition" $color={c.red} $size={16}>شرایط انتخاب</CaptionLabel>
      <BlackBox id="condition" />
      <Formula>فر<br />محا</Formula>
      <Help>?</Help>
    </Conditions>
    <TabRow><Tab>شرایط انتخاب</Tab></TabRow>
    <Filter>
      <FilterBody>
        <FilterTable>
          <colgroup><col width={25} /><col width={194} /><col /><col width={31} /></colgroup>
          <thead>
            <tr>
              <HeadCell $color="#1414c8"><b dir="ltr">)</b></HeadCell>
              <HeadCell $color="#6c0818">نام پرونده</HeadCell>
              <HeadCell $color="#000" />
              <HeadCell $color="#1414c8"><b dir="ltr">(</b></HeadCell>
            </tr>
          </thead>
          <tbody>
            <tr>
              <Cell $bg="#ffff00" />
              <Cell $bg="#b5c9e8" />
              <Cell $bg="#fff" />
              <Cell $bg="#ffff00" />
            </tr>
          </tbody>
        </FilterTable>
      </FilterBody>
    </Filter>
    <Footer>
      <Access>
        <legend>دسترسی دیگر کاربران به این گزارش</legend>
        <Choice><Tick defaultChecked />قابل رویت</Choice>
        <Choice><Tick defaultChecked />قابل کپی</Choice>
        <Choice><Tick defaultChecked />قابل تغییر</Choice>
      </Access>
      <Caption $color={c.red} $size={13}>نمایش بصورت</Caption>
      <Display>
        <Choice><Radio name="display" />یکجا</Choice>
        <Choice><Radio name="display" defaultChecked />پلکانی</Choice>
      </Display>
      <FootColumn $w={100}>
        <CaptionLabel htmlFor="mode" $color={c.red}>نحوه ذخیره سازی</CaptionLabel>
        <Combo>
          <ComboSelect id="mode"><option>کل اطلاعات</option></ComboSelect>
          <ComboArrow><Chevron /></ComboArrow>
        </Combo>
      </FootColumn>
      <FootColumn $w={94}>
        <CaptionLabel htmlFor="rows" $color={c.red}>ردیفهای هر صفحه</CaptionLabel>
        <Spinner>
          <SpinButtons>
            <SpinButton><Triangle up /></SpinButton>
            <SpinButton><Triangle /></SpinButton>
          </SpinButtons>
          <SpinInput id="rows" defaultValue="۱۰۰" />
        </Spinner>
      </FootColumn>
      <BigButton $color="#f0cc10" $w={88} $gap={61}>ذخیره<FloppyIcon /></BigButton>
      <BigButton $color="#f40c14" $w={86} $gap={38}>خروج<ArrowIcon /></BigButton>
    </Footer>
  </ReportWindow>
);

const Search = () => (
  <SearchWindow>
    <SearchTitle>
      <WindowButton $danger><CloseGlyph /></WindowButton>
      <WindowButton><MaxGlyph /></WindowButton>
      <WindowButton><MinGlyph /></WindowButton>
      <TitleText as="h2">جستجو</TitleText>
      <DatabaseIcon />
    </SearchTitle>
    <SearchGrid>
      <SearchTable>
        <colgroup><col width={13} /><col width={65} /><col width={171} /><col width={43} /><col width={89} /></colgroup>
        <thead>
          <tr>
            <SearchHead $mark="black" />
            <SearchHead $mark="gray" $end>کد</SearchHead>
            <SearchHead>عنوان</SearchHead>
            <SearchHead $mark="gray">کد پروند</SearchHead>
            <SearchHead>عنوان پرونده</SearchHead>
          </tr>
        </thead>
        <tbody>
          {found.map(([code, title], i) => (
            <SearchRow key={code} $on={i === 0} $odd={i % 2 === 1}>
              <th>{i === 0 && <Pointer />}</th>
              <td>{code}</td>
              <td>{title}</td>
              <td>۳۹</td>
              <td>[واحد سازمانی]</td>
            </SearchRow>
          ))}
        </tbody>
      </SearchTable>
      <Push />
      <ScrollBar before={1} thumb={62} />
    </SearchGrid>
    <Criteria>
      <Criterion $w={64} $inset={13}><span>کد</span><CriterionInput /></Criterion>
      <Criterion $w={170}><span>عنوان</span><CriterionInput /></Criterion>
      <Criterion $w={42}><span>کد پرونده</span><CriterionInput /></Criterion>
      <Criterion $w={88}><span>عنوان پرونده</span><CriterionInput /></Criterion>
    </Criteria>
    <SearchActions>
      <ActionButton><CrossIcon />انصراف</ActionButton>
      <ActionButton><CheckIcon />انتخاب</ActionButton>
    </SearchActions>
  </SearchWindow>
);

export default function App() {
  return (
    <>
      <GlobalStyle />
      <Desktop dir="rtl" lang="fa">
        <TitleBar>
          <WindowButton><CloseGlyph /></WindowButton>
          <WindowButton><RestoreGlyph /></WindowButton>
          <WindowButton><MinGlyph /></WindowButton>
          <TitleText>سیستم پایگاه - [گزارش ساز نسخه ۳,۰]</TitleText>
          <DatabaseIcon />
        </TitleBar>
        <MenuBar>
          <MdiButtons>
            <MdiButton><CloseGlyph size={9} /></MdiButton>
            <MdiButton><RestoreGlyph size={10} /></MdiButton>
            <MdiButton><MinGlyph size={10} /></MdiButton>
          </MdiButtons>
          {menus.map((m) => <MenuLink key={m} href="#">{m}</MenuLink>)}
          <Push />
          <DatabaseIcon />
        </MenuBar>
        <GreenStrip />
        <Main>
          <SideBar>
            <SideGroup>مدیریت کلان</SideGroup>
            <SideGroup>مدیریت</SideGroup>
            <SideGroup>گزارشات</SideGroup>
            <SideList>
              <SideItem href="#"><BinocularsIcon /><span>گزارش ساز</span></SideItem>
              <SideItem href="#"><ScrollIcon /><span>مدیریت گزار<br />پیشرفته</span></SideItem>
            </SideList>
          </SideBar>
          <Content>
            <Toolbar>
              {tools.map((t) => (
                <ToolButton key={t.text} $w={t.w} $active={t.active} $apart={t.apart} $narrow={t.narrow}>{t.text}</ToolButton>
              ))}
            </Toolbar>
            <GridArea>
              <ReportTable>
                <colgroup><col width={12} /><col width={82} /><col width={328} /><col width={410} /><col width={91} /></colgroup>
                <thead>
                  <tr><th /><th>شماره گزارش</th><th>نام گزارش</th><th>توضیحات</th><th>فایل گزارش</th></tr>
                </thead>
                <tbody>
                  {Array.from({ length: 35 }, (_, i) => (
                    <tr key={i}><th /><td /><td /><td /><td /></tr>
                  ))}
                  {reports.map(([id, name, note]) => (
                    <tr key={id}><th /><td>{id}</td><td>{name}</td><td>{note}</td><td /></tr>
                  ))}
                </tbody>
              </ReportTable>
              <Push />
              <ScrollBar before={303} thumb={142} />
            </GridArea>
            <EntryStrip>
              <Entry $w={121} aria-label="شماره" />
              <Entry $w={625} aria-label="توضیحات" />
            </EntryStrip>
          </Content>
        </Main>
        <StatusBar>
          <StatusCell $w={313} />
          <StatusCell $w={170}><bdi dir="ltr">(BAKFADB2(paygah16590\۱۷۲,۱۶,۰,۱۶۰</bdi></StatusCell>
          <StatusCell $w={170} $inset={104}>حوزه&nbsp; ستادی</StatusCell>
          <StatusCell $w={180}><bdi>modir</bdi></StatusCell>
          <StatusCell $w={180}>آمار شهریور پیش نویس ۸۹-۹۰</StatusCell>
          <StatusCell $w={130} $inset={4}>شنبه - ۱۳۹۰/۱۰/۱۷</StatusCell>
          <StatusCell $w={118}>نسخه ۶,۰</StatusCell>
        </StatusBar>
        <TaskBar dir="ltr">
          <StartButton aria-label="Start"><StartOrb /></StartButton>
          <QuickLaunch>
            {quickIcons.map((q) => (
              <svg key={q.name} width="18" height="18" viewBox="0 0 16 16">{q.art}</svg>
            ))}
          </QuickLaunch>
          <Tasks>
            <Task><ShellIcon /><bdi dir="rtl">سازمان الكترونیك وزار...</bdi></Task>
            <Task $active><DatabaseIcon />Paygah</Task>
            <Task><PaintIcon />untitled - Paint</Task>
          </Tasks>
          <Language>FA</Language>
          <Tray>
            <TrayToggle aria-label="Show icons">
              <svg width="6" height="8" viewBox="0 0 6 8" fill="none" stroke="currentColor" strokeWidth="2"><path d="M5 1L2 4l3 3" /></svg>
            </TrayToggle>
            <DatabaseIcon />
            <DatabaseIcon />
            <MonitorsIcon />
            <Clock dir="ltr">03:04 ب.ظ</Clock>
          </Tray>
        </TaskBar>
        <ReportDetails />
        <Search />
        <Tooltip dir="ltr" role="tooltip">Close</Tooltip>
      </Desktop>
    </>
  );
}
